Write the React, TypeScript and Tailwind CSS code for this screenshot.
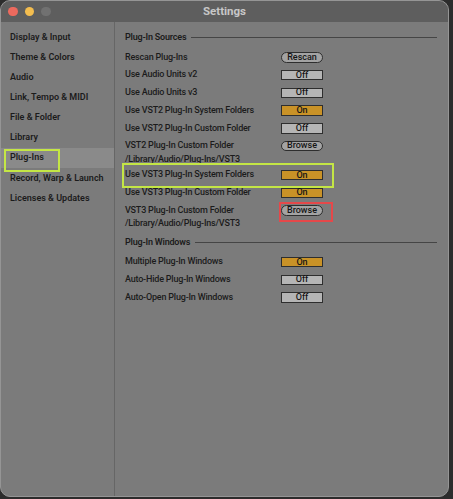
import React from "react";

type Row =
  | { kind: "toggle"; label: string; on: boolean }
  | { kind: "pill"; label: string; text: string }
  | { kind: "path"; label: string; text: string; path: string };

const sources: Row[] = [
  { kind: "pill", label: "Rescan Plug-Ins", text: "Rescan" },
  { kind: "toggle", label: "Use Audio Units v2", on: false },
  { kind: "toggle", label: "Use Audio Units v3", on: false },
  { kind: "toggle", label: "Use VST2 Plug-In System Folders", on: true },
  { kind: "toggle", label: "Use VST2 Plug-In Custom Folder", on: false },
  { kind: "path", label: "VST2 Plug-In Custom Folder", text: "Browse", path: "/Library/Audio/Plug-Ins/VST3" },
  { kind: "toggle", label: "Use VST3 Plug-In System Folders", on: true },
  { kind: "toggle", label: "Use VST3 Plug-In Custom Folder", on: true },
  { kind: "path", label: "VST3 Plug-In Custom Folder", text: "Browse", path: "/Library/Audio/Plug-Ins/VST3" },
];

const windows: Row[] = [
  { kind: "toggle", label: "Multiple Plug-In Windows", on: true },
  { kind: "toggle", label: "Auto-Hide Plug-In Windows", on: false },
  { kind: "toggle", label: "Auto-Open Plug-In Windows", on: false },
];

const nav = [
  "Display & Input",
  "Theme & Colors",
  "Audio",
  "Link, Tempo & MIDI",
  "File & Folder",
  "Library",
  "Plug-Ins",
  "Record, Warp & Launch",
  "Licenses & Updates",
];

function Toggle({ on }: { on: boolean }) {
  return (
    <div
      className={
        "w-[42px] h-[10.5px] border border-[#2e2e2e] flex items-center justify-center text-[9px] leading-none font-medium tracking-normal text-[#151515] " +
        (on ? "bg-[#c99227]" : "bg-[#b5b5b5]")
      }
    >
      {on ? "On" : "Off"}
    </div>
  );
}

function Pill({ text }: { text: string }) {
  return (
    <div className="w-[42px] h-[10.5px] rounded-full border border-[#2e2e2e] bg-[#a3a3a3] flex items-center justify-center text-[9px] leading-none font-medium tracking-normal text-[#151515]">
      {text}
    </div>
  );
}

function RowView({ row }: { row: Row }) {
  if (row.kind === "path") {
    return (
      <div className="h-[29.2px] flex flex-col">
        <div className="h-[17.7px] flex items-center">
          <div className="w-[156px]">{row.label}</div>
          <Pill text={row.text} />
        </div>
        <div className="leading-[9px]">{row.path}</div>
      </div>
    );
  }
  return (
    <div className="h-[17.7px] flex items-center">
      <div className="w-[156px]">{row.label}</div>
      {row.kind === "toggle" ? <Toggle on={row.on} /> : <Pill text={row.text} />}
    </div>
  );
}

function Header({ title, className = "" }: { title: string; className?: string }) {
  return (
    <div className={"h-[21px] flex items-center pb-[1px] " + className}>
      <span className="font-semibold">{title}</span>
      <div className="flex-1 h-px bg-[#454545] ml-[5px]" />
    </div>
  );
}

export default function App() {
  return (
    <div
      className="w-[453px] h-[499px] bg-[#2c2c2c] overflow-hidden"
      style={{ fontFamily: 'Roboto, "Liberation Sans", Arial, sans-serif' }}
    >
      <div className="relative w-[449px] h-[497px] rounded-[10px] border border-[#959595] bg-[#7b7b7b] overflow-hidden flex flex-col">
        <div className="relative h-[21px] bg-[#5e5e5e] flex items-center justify-center shrink-0">
          <div className="absolute left-[7px] top-[5.5px] flex gap-[7px]">
            <div className="w-[9.5px] h-[9.5px] rounded-full bg-[#ec6a5e]" />
            <div className="w-[9.5px] h-[9.5px] rounded-full bg-[#f3bd4f]" />
            <div className="w-[9.5px] h-[9.5px] rounded-full bg-[#717171]" />
          </div>
          <span className="text-[11.5px] font-bold text-[#c7c7c7]">Settings</span>
        </div>
        <div className="flex flex-1 min-h-0">
          <div className="w-[114px] shrink-0 border-r border-[#666666] pt-[5.3px] text-[9px] font-semibold text-[#1b1b1b]">
            {nav.map((n) => (
              <div
                key={n}
                className={"h-[20.15px] flex items-center pl-[9px] " + (n === "Plug-Ins" ? "bg-[#8a8a8a]" : "")}
              >
                {n}
              </div>
            ))}
          </div>
          <div className="flex-1 pl-[10px] pr-[11px] pt-[5.7px] text-[9px] font-medium tracking-[-0.2px] text-[#1b1b1b]">
            <Header title="Plug-In Sources" />
            {sources.map((r, i) => (
              <RowView key={i} row={r} />
            ))}
            <Header title="Plug-In Windows" className="mt-[1.5px]" />
            {windows.map((r, i) => (
              <RowView key={i} row={r} />
            ))}
          </div>
        </div>
        <div className="absolute left-[3px] top-[148px] w-[56px] h-[23px] border-2 border-[#c4e645]" />
        <div className="absolute left-[121px] top-[162px] w-[212px] h-[25px] border-2 border-[#c4e645]" />
        <div className="absolute left-[278px] top-[201px] w-[54px] h-[20px] border-2 border-[#e5484a]" />
      </div>
    </div>
  );
}
